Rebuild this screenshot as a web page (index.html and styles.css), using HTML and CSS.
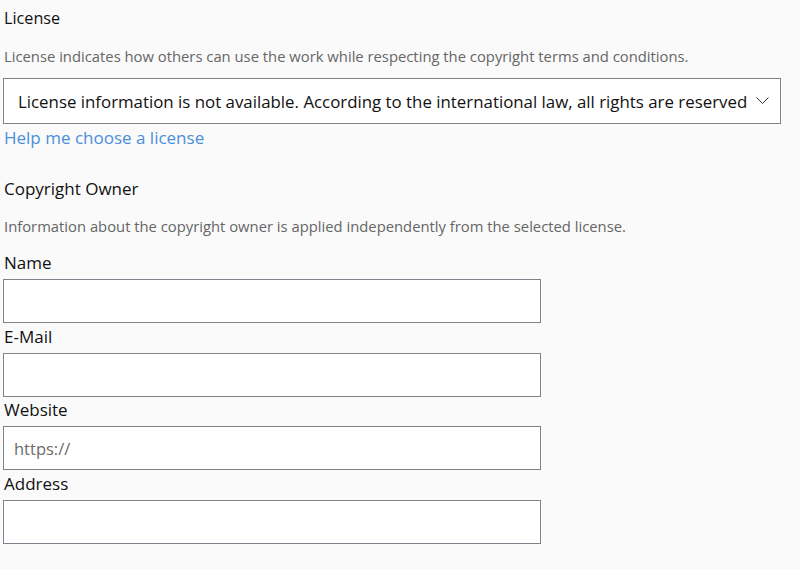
FILE: index.html
```html
<!DOCTYPE html>
<html lang="en">
<head>
<meta charset="utf-8">
<title>License</title>
<link rel="stylesheet" href="styles.css">
</head>
<body>
<main class="page">
  <section class="group">
    <h2 class="group-title">License</h2>
    <p class="group-desc">License indicates how others can use the work while respecting the copyright terms and conditions.</p>
    <div class="select">
      <span class="select-text">License information is not available. According to the international law, all rights are reserved</span>
      <svg class="chevron" width="13" height="8" viewBox="0 0 13 8"><polyline points="0.5,0.5 6.5,6.5 12.5,0.5" fill="none" stroke="#333" stroke-width="1"/></svg>
    </div>
    <a class="help-link" href="#">Help me choose a license</a>
  </section>
  <section class="group owner">
    <h2 class="group-title">Copyright Owner</h2>
    <p class="group-desc">Information about the copyright owner is applied independently from the selected license.</p>
    <div class="fields">
      <label class="field"><span class="field-label">Name</span><span class="input"></span></label>
      <label class="field"><span class="field-label">E-Mail</span><span class="input"></span></label>
      <label class="field"><span class="field-label">Website</span><span class="input"><span class="placeholder">https://</span></span></label>
      <label class="field"><span class="field-label">Address</span><span class="input"></span></label>
    </div>
  </section>
</main>
</body>
</html>
```
FILE: styles.css
```css
html, body {
  margin: 0;
  padding: 0;
  background: #fafafa;
}
body {
  font-family: "Open Sans", "Noto Sans", sans-serif;
  color: #111;
  width: 800px;
  height: 569px;
  overflow: hidden;
}
.page {
  padding: 6px 0 0 3px;
}
.group {
  display: flex;
  flex-direction: column;
  align-items: flex-start;
}
.group-title {
  margin: 0 0 0 1px;
  font-size: 16.2px;
  font-weight: 400;
  line-height: 24px;
}
.owner .group-title {
  font-size: 17px;
}
.group-desc {
  margin: 16px 0 0 1px;
  font-size: 14.8px;
  line-height: 20px;
  color: #666;
}
.select {
  box-sizing: border-box;
  margin-top: 12px;
  width: 778px;
  height: 46px;
  background: #fff;
  border: 1px solid #7e848c;
  display: flex;
  align-items: center;
  justify-content: space-between;
  padding: 0 11px 0 14px;
}
.select-text {
  font-size: 16.85px;
  color: #111;
  white-space: nowrap;
}
.chevron {
  display: block;
}
.help-link {
  margin: 3px 0 0 1px;
  font-size: 17px;
  line-height: 22px;
  color: #4a8fdb;
  text-decoration: none;
}
.owner {
  margin-top: 28px;
}
.owner .group-desc {
  margin-top: 15px;
}
.fields {
  display: flex;
  flex-direction: column;
  margin-top: 0;
}
.field {
  display: flex;
  flex-direction: column;
  align-items: flex-start;
}
.field-label {
  margin-left: 1px;
  font-size: 17px;
  line-height: 25px;
  padding: 0.5px 0 4px;
}
.fields .field:first-child .field-label {
  padding-top: 14px;
}
.input {
  box-sizing: border-box;
  width: 538px;
  height: 44px;
  background: #fff;
  border: 1px solid #7e848c;
  display: flex;
  align-items: center;
  padding-left: 10px;
}
.placeholder {
  font-size: 16.5px;
  color: #6b6b6b;
}
```
